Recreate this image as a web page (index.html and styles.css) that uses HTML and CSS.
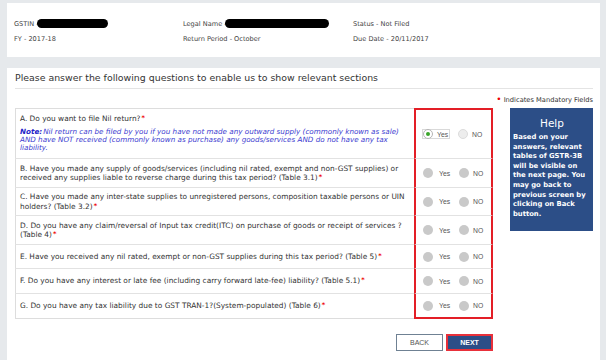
FILE: index.html
```html
<!DOCTYPE html>
<html>
	<head>
		<meta charset="UTF-8">
		<title>GSTR-3B</title>
		<link rel="stylesheet" href="styles.css">
	</head>
	<body>
		<div class="summary">
			<div class="sum-col first">
				<p>GSTIN - <span class="mask gstin"></span></p>
				<p>FY - 2017-18</p>
			</div>
			<div class="sum-col second">
				<p>Legal Name - <span class="mask lname"></span></p>
				<p>Return Period - October</p>
			</div>
			<div class="sum-col">
				<p>Status - Not Filed</p>
				<p>Due Date - 20/11/2017</p>
			</div>
		</div>

		<div class="card">
			<h2 class="title">Please answer the following questions to enable us to show relevant sections</h2>
			<p class="mandatory"><span class="dot">&bull;</span> Indicates Mandatory Fields</p>

			<div class="main">
				<div class="left">
					<div class="qtable">
						<div class="q first-row">
							<div>
								<p class="req">A. Do you want to file Nil return?</p>
								<p class="note"><b>Note:</b>Nil return can be filed by you if you have not made any outward supply (commonly known as sale) AND have NOT received (commonly known as purchase) any goods/services AND do not have any tax liability.</p>
							</div>
						</div>
						<div class="a first-row">
							<span class="picked"><span class="radio on"></span><span class="lbl">Yes</span></span>
							<span class="radio off"></span><span class="lbl">NO</span>
						</div>

						<div class="q"><p class="req">B. Have you made any supply of goods/services (including nil rated, exempt and non-GST supplies) or received any supplies liable to reverse charge during this tax period? (Table 3.1)</p></div>
						<div class="a"><span class="radio"></span><span class="lbl">Yes</span><span class="radio"></span><span class="lbl">NO</span></div>

						<div class="q"><p class="req">C. Have you made any inter-state supplies to unregistered persons, composition taxable persons or UIN holders? (Table 3.2)</p></div>
						<div class="a"><span class="radio"></span><span class="lbl">Yes</span><span class="radio"></span><span class="lbl">NO</span></div>

						<div class="q"><p class="req">D. Do you have any claim/reversal of Input tax credit(ITC) on purchase of goods or receipt of services ? (Table 4)</p></div>
						<div class="a"><span class="radio"></span><span class="lbl">Yes</span><span class="radio"></span><span class="lbl">NO</span></div>

						<div class="q"><p class="req">E. Have you received any nil rated, exempt or non-GST supplies during this tax period? (Table 5)</p></div>
						<div class="a"><span class="radio"></span><span class="lbl">Yes</span><span class="radio"></span><span class="lbl">NO</span></div>

						<div class="q"><p class="req">F. Do you have any interest or late fee (including carry forward late-fee) liability? (Table 5.1)</p></div>
						<div class="a"><span class="radio"></span><span class="lbl">Yes</span><span class="radio"></span><span class="lbl">NO</span></div>

						<div class="q last-row"><p class="req">G. Do you have any tax liability due to GST TRAN-1?(System-populated) (Table 6)</p></div>
						<div class="a last-row"><span class="radio"></span><span class="lbl">Yes</span><span class="radio"></span><span class="lbl">NO</span></div>
					</div>

					<div class="actions">
						<button class="btn back">BACK</button>
						<button class="btn next">NEXT</button>
					</div>
				</div>

				<div class="help">
					<h3>Help</h3>
					<p>Based on your<br>answers, relevant<br>tables of GSTR-3B<br>will be visible on<br>the next page. You<br>may go back to<br>previous screen by<br>clicking on Back<br>button.</p>
				</div>
			</div>
		</div>
	</body>
</html>
```

FILE: styles.css
```css
*{
    margin: 0;
    padding: 0;
    box-sizing: border-box;
}
body{
    background: #e6e9ec;
    padding: 3px 6px 0 7px;
    font-family: "DejaVu Sans", Verdana, sans-serif;
    color: #444;
    height: 360px;
    overflow: hidden;
}

/* top summary strip */
.summary{
    background: #fff;
    height: 54px;
    padding: 15px 0 0 7px;
    display: flex;
    font-size: 6.6px;
}
.sum-col{
    width: 170px;
}
.sum-col.first{
    width: 169px;
}
.sum-col p{
    height: 15px;
    line-height: 12px;
}
.mask{
    display: inline-block;
    vertical-align: middle;
    height: 9px;
    background: #000;
    border-radius: 5px;
    margin-left: -4px;
    margin-top: -2px;
}
.mask.gstin{ width: 71px; }
.mask.lname{ width: 104px; }

/* questions card */
.card{
    background: #fff;
    margin-top: 11px;
    padding: 3px 7px 0 8px;
    height: 300px;
}
.title{
    font-weight: normal;
    font-size: 9.4px;
    color: #333;
    line-height: 14px;
    padding-bottom: 3px;
    border-bottom: 1px solid #e4e4e4;
}
.mandatory{
    text-align: right;
    font-size: 6.7px;
    line-height: 10px;
    margin-top: 5px;
    color: #333;
}
.mandatory .dot{
    color: #e00;
    font-size: 9px;
}
.main{
    display: flex;
    gap: 17px;
    margin-top: 3px;
}
.left{
    width: 478px;
}
.qtable{
    display: grid;
    grid-template-columns: 1fr 79px;
    grid-template-rows: 51px 29px 28px 29px 24px 25px 25px;
}
.q{
    border-left: 1px solid #ddd;
    border-bottom: 1px solid #e2e2e2;
    padding: 0 5px 0 4px;
    display: flex;
    align-items: center;
    font-size: 7.4px;
    line-height: 9.3px;
    color: #333;
}
.q.first-row{
    border-top: 1px solid #ddd;
}
.q.last-row{
    border-bottom: 1px solid #ddd;
}
/* red mandatory mark */
.req::after{
    content: "*";
    color: #e00;
    font-weight: bold;
    font-size: 6.5px;
    line-height: 1;
    vertical-align: 1px;
    margin-left: 1px;
}
.note{
    color: #3b3bd0;
    font-style: italic;
    font-size: 7.2px;
    margin-top: 4px;
    line-height: 8.4px;
}
.note b{
    color: #2323c8;
    margin-right: 1px;
}
.a{
    border-left: 2px solid #e31e26;
    border-right: 2px solid #e31e26;
    border-bottom: 1px solid #e2e2e2;
    display: flex;
    align-items: center;
    padding-left: 7px;
    font-family: "Liberation Sans", Arial, sans-serif;
    font-size: 6.8px;
    color: #555;
}
.a.first-row{
    border-top: 2px solid #e31e26;
}
.a.last-row{
    border-bottom: 2px solid #e31e26;
}
.radio{
    width: 10px;
    height: 10px;
    border-radius: 50%;
    background: #c9c9c9;
    flex: none;
}
.lbl{
    margin-left: 6px;
    margin-right: 9px;
}
.lbl:last-child{
    margin-left: 4px;
}
.picked{
    display: flex;
    align-items: center;
    border: 1px solid #d9d9d9;
    height: 10px;
    margin-left: -1px;
    margin-right: 8px;
}
.picked .lbl{
    margin-right: 1px;
}
.radio.on{
    background: #fff;
    border: 1px solid #b5b5b5;
    display: flex;
    align-items: center;
    justify-content: center;
}
.radio.on::after{
    content: "";
    width: 4px;
    height: 4px;
    border-radius: 50%;
    background: #3aa52a;
}
.radio.off{
    background: #ededed;
    border: 1px solid #dcdcdc;
}

.actions{
    display: flex;
    justify-content: flex-end;
    gap: 3px;
    margin-top: 15px;
}
.btn{
    width: 47px;
    height: 17px;
    font-family: "Liberation Sans", Arial, sans-serif;
    font-size: 7px;
    cursor: pointer;
}
.btn.back{
    background: #fff;
    border: 1px solid #6f8193;
    color: #555;
}
.btn.next{
    background: #2c4e87;
    border: 2px solid #e8303a;
    color: #fff;
    font-weight: bold;
}

/* help box */
.help{
    width: 83px;
    height: 123px;
    background: #2c4e87;
    color: #fff;
    padding: 7px 2px 0 3px;
}
.help h3{
    font-weight: normal;
    font-size: 10.5px;
    text-align: center;
    line-height: 17px;
}
.help p{
    font-size: 6.8px;
    font-weight: bold;
    line-height: 9.6px;
    margin-top: 1px;
    white-space: nowrap;
}
```
